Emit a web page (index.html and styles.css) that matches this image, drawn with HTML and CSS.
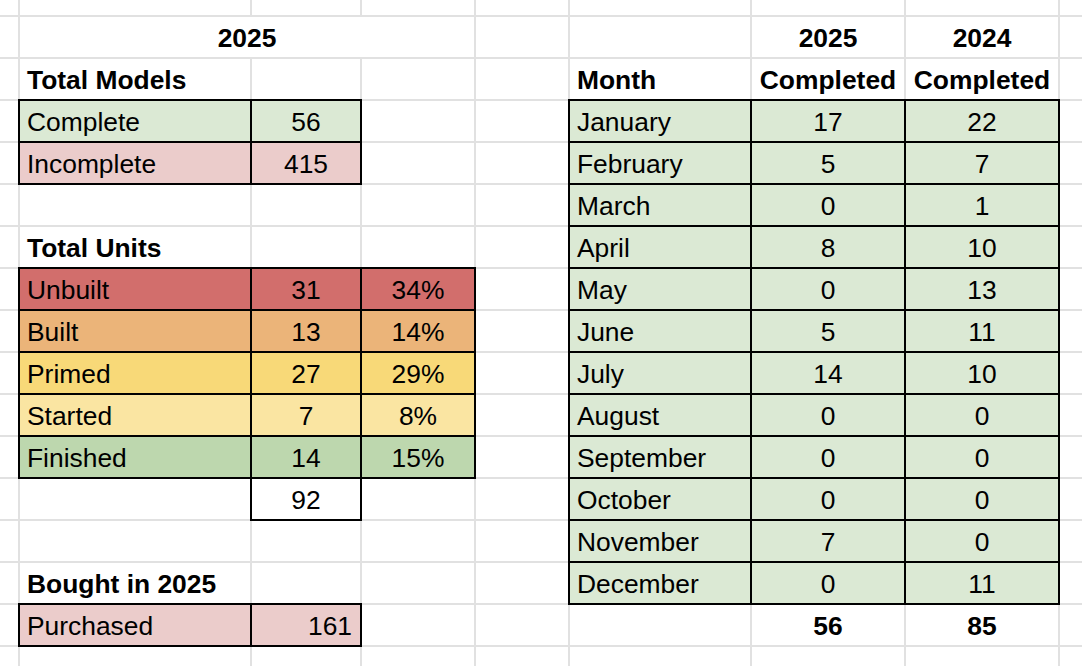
FILE: index.html
```html
<!DOCTYPE html>
<html lang="en">
<head>
<meta charset="utf-8">
<title>2025 Models</title>
<link rel="stylesheet" href="styles.css">
</head>
<body>
<div class="sheet">
  <!-- Left block -->
  <div class="cell hdr merged r2 c2-4 center">2025</div>
  <div class="cell hdr r3 c2">Total Models</div>
  <div class="cell b green r4 c2">Complete</div>
  <div class="cell b green r4 c3 center">56</div>
  <div class="cell b pink r5 c2">Incomplete</div>
  <div class="cell b pink r5 c3 center">415</div>

  <div class="cell hdr r7 c2">Total Units</div>
  <div class="cell b unbuilt r8 c2">Unbuilt</div>
  <div class="cell b unbuilt r8 c3 center">31</div>
  <div class="cell b unbuilt r8 c4 center">34%</div>
  <div class="cell b built r9 c2">Built</div>
  <div class="cell b built r9 c3 center">13</div>
  <div class="cell b built r9 c4 center">14%</div>
  <div class="cell b primed r10 c2">Primed</div>
  <div class="cell b primed r10 c3 center">27</div>
  <div class="cell b primed r10 c4 center">29%</div>
  <div class="cell b started r11 c2">Started</div>
  <div class="cell b started r11 c3 center">7</div>
  <div class="cell b started r11 c4 center">8%</div>
  <div class="cell b finished r12 c2">Finished</div>
  <div class="cell b finished r12 c3 center">14</div>
  <div class="cell b finished r12 c4 center">15%</div>
  <div class="cell b white r13 c3 center">92</div>

  <div class="cell hdr r15 c2">Bought in 2025</div>
  <div class="cell b pink r16 c2">Purchased</div>
  <div class="cell b pink r16 c3 right">161</div>

  <!-- Right block -->
  <div class="cell hdr r2 c6 center">2025</div>
  <div class="cell hdr r2 c7 center">2024</div>
  <div class="cell hdr r3 c5">Month</div>
  <div class="cell hdr r3 c6 center">Completed</div>
  <div class="cell hdr r3 c7 center">Completed</div>

  <div class="cell b green r4 c5">January</div>
  <div class="cell b green r4 c6 center">17</div>
  <div class="cell b green r4 c7 center">22</div>
  <div class="cell b green r5 c5">February</div>
  <div class="cell b green r5 c6 center">5</div>
  <div class="cell b green r5 c7 center">7</div>
  <div class="cell b green r6 c5">March</div>
  <div class="cell b green r6 c6 center">0</div>
  <div class="cell b green r6 c7 center">1</div>
  <div class="cell b green r7 c5">April</div>
  <div class="cell b green r7 c6 center">8</div>
  <div class="cell b green r7 c7 center">10</div>
  <div class="cell b green r8 c5">May</div>
  <div class="cell b green r8 c6 center">0</div>
  <div class="cell b green r8 c7 center">13</div>
  <div class="cell b green r9 c5">June</div>
  <div class="cell b green r9 c6 center">5</div>
  <div class="cell b green r9 c7 center">11</div>
  <div class="cell b green r10 c5">July</div>
  <div class="cell b green r10 c6 center">14</div>
  <div class="cell b green r10 c7 center">10</div>
  <div class="cell b green r11 c5">August</div>
  <div class="cell b green r11 c6 center">0</div>
  <div class="cell b green r11 c7 center">0</div>
  <div class="cell b green r12 c5">September</div>
  <div class="cell b green r12 c6 center">0</div>
  <div class="cell b green r12 c7 center">0</div>
  <div class="cell b green r13 c5">October</div>
  <div class="cell b green r13 c6 center">0</div>
  <div class="cell b green r13 c7 center">0</div>
  <div class="cell b green r14 c5">November</div>
  <div class="cell b green r14 c6 center">7</div>
  <div class="cell b green r14 c7 center">0</div>
  <div class="cell b green r15 c5">December</div>
  <div class="cell b green r15 c6 center">0</div>
  <div class="cell b green r15 c7 center">11</div>

  <div class="cell hdr r16 c6 center">56</div>
  <div class="cell hdr r16 c7 center">85</div>
</div>
</body>
</html>
```

FILE: styles.css
```css
html, body {
  margin: 0;
  padding: 0;
  background: #ffffff;
}

.sheet {
  width: 1082px;
  height: 666px;
  overflow: hidden;
  display: grid;
  grid-template-columns: 18px 230px 108px 112px 92px 180px 152px 152px 22px;
  grid-template-rows: 15px repeat(15, 40px) 19px;
  gap: 2px;
  font-family: "Liberation Sans", Arial, sans-serif;
  font-size: 26.4px;
  color: #000;
  background-color: #ffffff;
  background-image:
    repeating-linear-gradient(to bottom, #e1e1e1 0 2px, transparent 2px 42px),
    linear-gradient(#e1e1e1, #e1e1e1),
    linear-gradient(#e1e1e1, #e1e1e1),
    linear-gradient(#e1e1e1, #e1e1e1),
    linear-gradient(#e1e1e1, #e1e1e1),
    linear-gradient(#e1e1e1, #e1e1e1),
    linear-gradient(#e1e1e1, #e1e1e1),
    linear-gradient(#e1e1e1, #e1e1e1),
    linear-gradient(#e1e1e1, #e1e1e1);
  background-size:
    100% 42px,
    2px 100%, 2px 100%, 2px 100%, 2px 100%,
    2px 100%, 2px 100%, 2px 100%, 2px 100%;
  background-position:
    0 15px,
    18px 0, 250px 0, 360px 0, 474px 0,
    568px 0, 750px 0, 904px 0, 1058px 0;
  background-repeat:
    repeat-y,
    no-repeat, no-repeat, no-repeat, no-repeat,
    no-repeat, no-repeat, no-repeat, no-repeat;
}

.cell {
  display: flex;
  align-items: flex-end;
  padding: 0 8px 4px 7px;
  line-height: 30px;
  white-space: nowrap;
  min-width: 0;
}

.center { justify-content: center; padding-left: 0; padding-right: 0; }
.right { justify-content: flex-end; }

.hdr { font-weight: bold; }
.merged { background: #ffffff; }

.b { outline: 2px solid #000; }

.white { background: #ffffff; }
.green { background: #dbe9d4; }
.pink { background: #ebcccb; }
.unbuilt { background: #d26e6c; }
.built { background: #ebb479; }
.primed { background: #f8d978; }
.started { background: #fae5a2; }
.finished { background: #bdd7ae; }

.r2 { grid-row: 2; }
.r3 { grid-row: 3; }
.r4 { grid-row: 4; }
.r5 { grid-row: 5; }
.r6 { grid-row: 6; }
.r7 { grid-row: 7; }
.r8 { grid-row: 8; }
.r9 { grid-row: 9; }
.r10 { grid-row: 10; }
.r11 { grid-row: 11; }
.r12 { grid-row: 12; }
.r13 { grid-row: 13; }
.r14 { grid-row: 14; }
.r15 { grid-row: 15; }
.r16 { grid-row: 16; }

.c2 { grid-column: 2; }
.c3 { grid-column: 3; }
.c4 { grid-column: 4; }
.c5 { grid-column: 6; }
.c6 { grid-column: 7; }
.c7 { grid-column: 8; }
.c2-4 { grid-column: 2 / 5; }
```
